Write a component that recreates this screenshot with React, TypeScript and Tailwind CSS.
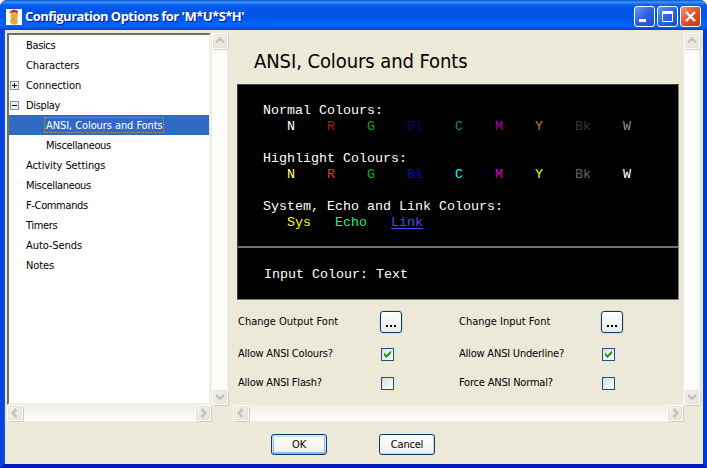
import type { ReactNode } from 'react'

const ui = "font-['DejaVu_Sans_Condensed','DejaVu_Sans',sans-serif] text-[11px]"

const arrows = {
  up: 'M4 9.5 8 5.5l4 4',
  down: 'M4 6l4 4 4-4',
  left: 'M9.5 4l-4 4 4 4',
  right: 'M6.5 4l4 4-4 4',
}

function ScrollButton({ dir }: { dir: keyof typeof arrows }) {
  return (
    <div className="h-4 w-4 shrink-0 rounded-[2px] border border-white bg-linear-to-br from-[#f4f3ee] to-[#e6e4d9] shadow-[1px_1px_0_#d0cdbe,inset_0_0_0_1px_#e5e3d8]">
      <svg viewBox="1 1 14 14" className="h-3.5 w-3.5" fill="none" stroke="#c7c5ba" strokeWidth="2.6">
        <path d={arrows[dir]} />
      </svg>
    </div>
  )
}

function VScroll() {
  return (
    <div className="flex h-[372px] w-[17px] flex-col justify-between border-x border-[#eeede5] bg-[#fefefa]">
      <ScrollButton dir="up" />
      <ScrollButton dir="down" />
    </div>
  )
}

function HScroll({ className }: { className: string }) {
  return (
    <div className={`flex h-[17px] justify-between border-b border-[#eeede5] bg-linear-to-b from-[#f0eee8] to-[#fefefb] ${className}`}>
      <ScrollButton dir="left" />
      <ScrollButton dir="right" />
    </div>
  )
}

function Expander({ open }: { open: boolean }) {
  return (
    <svg viewBox="0 0 9 9" className="h-[9px] w-[9px]" shapeRendering="crispEdges">
      <rect width="9" height="9" rx="1" fill="#7898b5" />
      <rect x="1" y="1" width="7" height="7" fill="#f3f1eb" />
      <rect x="2" y="4" width="5" height="1" fill="#000" />
      {!open && <rect x="4" y="2" width="1" height="5" fill="#000" />}
    </svg>
  )
}

type Row = { label: string; child?: boolean; open?: boolean; selected?: boolean; tight?: boolean }
const rows: Row[] = [
  { label: 'Basics', tight: true },
  { label: 'Characters' },
  { label: 'Connection', open: false },
  { label: 'Display', open: true, tight: true },
  { label: 'ANSI, Colours and Fonts', child: true, selected: true },
  { label: 'Miscellaneous', child: true, tight: true },
  { label: 'Activity Settings' },
  { label: 'Miscellaneous', tight: true },
  { label: 'F-Commands', tight: true },
  { label: 'Timers', tight: true },
  { label: 'Auto-Sends' },
  { label: 'Notes' },
]

function Tree() {
  return (
    <div className="h-[372px] w-[204px] border-2 border-t-[#716f64] border-r-[#f1efe2] border-b-[#f1efe2] border-l-[#716f64] bg-white">
      {rows.map((r, i) => (
        <div key={i} className={`flex h-5 items-center ${r.selected ? 'bg-[#316ac5] text-white' : ''}`}>
          <div className={`flex shrink-0 pl-px ${r.child ? 'w-[35px]' : 'w-[15px]'}`}>
            {r.open !== undefined && <Expander open={r.open} />}
          </div>
          <span className={`h-4 border border-dotted pl-px leading-[16px] whitespace-nowrap ${r.tight ? 'tracking-[-0.35px]' : 'tracking-[-0.08px]'} ${r.selected ? 'border-[#ce953a]' : 'border-transparent'}`}>
            {r.label}
          </span>
        </div>
      ))}
    </div>
  )
}

function Sample({ items }: { items: [string, string][] }) {
  return (
    <div className="whitespace-pre">
      {items.map(([text, cls], i) => (
        <span key={i} className={cls}>{text}</span>
      ))}
    </div>
  )
}

function Preview() {
  return (
    <div className="h-[216px] w-[442px] border border-[#808080] border-t-[#404040] border-l-[#404040] bg-black font-['Liberation_Mono',monospace] text-[13.333px] leading-4 text-white">
      <div className="h-[161px] pt-[18px] pl-[25px]">
        <div>Normal Colours:</div>
        <Sample items={[
          ['   N', 'text-white'], ['    R', 'text-[#a81c14]'], ['    G', 'text-[#10a818]'],
          ['    Bl', 'text-[#00008a]'], ['    C', 'text-[#008a8a]'], ['    M', 'text-[#a800a8]'],
          ['    Y', 'text-[#b88a28]'], ['    Bk', 'text-[#383838]'], ['    W', 'text-[#8c8c8c]'],
        ]} />
        <div className="pt-4">Highlight Colours:</div>
        <Sample items={[
          ['   N', 'text-[#ffff90]'], ['    R', 'text-[#f03020]'], ['    G', 'text-[#10b018]'],
          ['    Bl', 'text-[#0000f0]'], ['    C', 'text-[#00ffff]'], ['    M', 'text-[#d000d0]'],
          ['    Y', 'text-[#ffff00]'], ['    Bk', 'text-[#646464]'], ['    W', 'text-white'],
        ]} />
        <div className="pt-4">System, Echo and Link Colours:</div>
        <Sample items={[
          ['   Sys', 'text-[#ffff00]'], ['   Echo', 'text-[#00ff80]'], ['   ', ''],
          ['Link', 'text-[#4848ff] underline underline-offset-2'],
        ]} />
      </div>
      <div className="h-[53px] border-t-2 border-[#707070] pt-[19px] pl-[26px]">Input Colour: Text</div>
    </div>
  )
}

function DotsButton() {
  return (
    <button className="-ml-px flex h-[22px] w-[22px] items-center justify-center rounded-[3px] border border-[#003c74] bg-linear-to-b from-white to-[#ecebe6] shadow-[0_0_0_1px_#dddccf]">
      <svg viewBox="0 0 10 2" className="mt-2 h-0.5 w-2.5" shapeRendering="crispEdges">
        <path d="M0 0h2v2H0zM4 0h2v2H4zM8 0h2v2H8z" />
      </svg>
    </button>
  )
}

function Checkbox({ checked }: { checked: boolean }) {
  return (
    <div className="h-[13px] w-[13px] border border-[#1c5180] bg-linear-to-br from-[#dcdcd7] to-white">
      {checked && (
        <svg viewBox="0 0 11 11" className="h-[11px] w-[11px]" shapeRendering="crispEdges">
          <path d="M2 4v3h1v1h1v1h1V8h1V7h1V6h1V5h1V2H8v1H7v1H6v1H5v1H4V5H3V4z" fill="#21a121" />
        </svg>
      )}
    </div>
  )
}

function Option({ label, children }: { label: string; children: ReactNode }) {
  return (
    <div className="flex w-[221px] items-center">
      <span className={`w-[143px] pt-px whitespace-nowrap ${label.includes('ANSI') ? 'tracking-[-0.2px]' : ''}`}>{label}</span>
      {children}
    </div>
  )
}

function PushButton({ label, primary }: { label: string; primary?: boolean }) {
  return (
    <button className={`h-[21px] w-14 rounded-[3px] border border-[#003c74] bg-linear-to-b from-white to-[#efeee8] pt-px leading-[18px] tracking-[-0.2px] ${primary ? 'shadow-[inset_0_1px_0_1px_#cee7ff,inset_0_0_0_2px_#98b4ec]' : 'shadow-[inset_-1px_-1px_0_#d9d5c8]'}`}>
      {label}
    </button>
  )
}

function CaptionButton({ kind }: { kind: 'min' | 'max' | 'close' }) {
  const bg = kind === 'close' ? 'from-[#f09078] via-[#e0502c] to-[#c03c14]' : 'from-[#6c94f0] via-[#2c62e0] to-[#1c50cc]'
  return (
    <div className={`h-[21px] w-[21px] rounded-[3px] border border-white bg-linear-to-br ${bg}`}>
      <svg viewBox="0 0 19 19" className="h-[19px] w-[19px]" fill="none" stroke="#fff">
        {kind === 'min' && <path d="M4 13.5h7" strokeWidth="3" />}
        {kind === 'max' && <path d="M4.5 4v10.5h10V4" strokeWidth="1" />}
        {kind === 'max' && <path d="M4 5.5h11" strokeWidth="3" />}
        {kind === 'close' && <path d="M5 5l9 9M14 5l-9 9" strokeWidth="2.4" />}
      </svg>
    </div>
  )
}

function AppIcon() {
  return (
    <svg viewBox="0 0 16 16" className="h-4 w-4">
      <rect width="16" height="16" fill="#fff" />
      <path d="M5.5 3.5H11l1 3-1 3 1 3-1.5 3H6L4 13l1-4-.5-3z" fill="#deb04a" />
      <path d="M6 7h1M6.500 11h2" stroke="#c4922f" />
      <path d="M3 4.500 4.500 2 8 .500l3.500 1L12 5l-2-1.500H6z" fill="#cf2c17" />
    </svg>
  )
}

export default function App() {
  return (
    <div className={`flex h-[468px] w-[707px] flex-col overflow-hidden rounded-t-[7px] bg-[#0831d9] text-black ${ui}`}>
      <div className="flex h-[30px] shrink-0 items-center bg-[linear-gradient(#0a54c8_0%,#3d95ff_7%,#0860ee_16%,#0054e3_35%,#0058ea_60%,#0066ff_85%,#0055e0_94%,#003dc8_100%)] pr-[6px] pl-[6px] pt-[3px]">
        <AppIcon />
        <span className="ml-[3px] flex-1 font-['Open_Sans','Noto_Sans',sans-serif] text-[13px] font-bold tracking-[-0.52px] whitespace-nowrap text-white [text-shadow:1px_1px_#0a1883]">
          Configuration Options for 'M*U*S*H'
        </span>
        <div className="flex gap-0.5">
          <CaptionButton kind="min" />
          <CaptionButton kind="max" />
          <CaptionButton kind="close" />
        </div>
      </div>
      <div className="flex flex-1 flex-col border-4 border-t-0 border-[#0842df] border-r-[#0038d8] border-b-[#001cb8] bg-[#ece9d8] shadow-[inset_1px_0_0_#0b5bf0]">
        <div className="flex gap-1 pt-[3px] pl-[3px]">
          <div>
            <div className="flex">
              <Tree />
              <VScroll />
            </div>
            <HScroll className="w-[204px]" />
          </div>
          <div>
            <div className="flex">
              <div className="h-[372px] w-[451px] pl-[5px]">
                <h1 className="h-[51px] pt-[14px] pl-[17px] text-[20px] leading-7 tracking-[-0.08px] whitespace-nowrap">ANSI, Colours and Fonts</h1>
                <Preview />
                <div className="pl-px">
                  <div className="flex h-[44px] items-center"><Option label="Change Output Font"><DotsButton /></Option><Option label="Change Input Font"><DotsButton /></Option></div>
                  <div className="flex h-[20px] items-center"><Option label="Allow ANSI Colours?"><Checkbox checked /></Option><Option label="Allow ANSI Underline?"><Checkbox checked /></Option></div>
                  <div className="flex h-[38px] items-center"><Option label="Allow ANSI Flash?"><Checkbox checked={false} /></Option><Option label="Force ANSI Normal?"><Checkbox checked={false} /></Option></div>
                </div>
              </div>
              <VScroll />
            </div>
            <HScroll className="ml-px w-[450px]" />
          </div>
        </div>
        <div className="flex gap-[52px] pt-3 pl-[267px]">
          <PushButton label="OK" primary />
          <PushButton label="Cancel" />
        </div>
      </div>
    </div>
  )
}
